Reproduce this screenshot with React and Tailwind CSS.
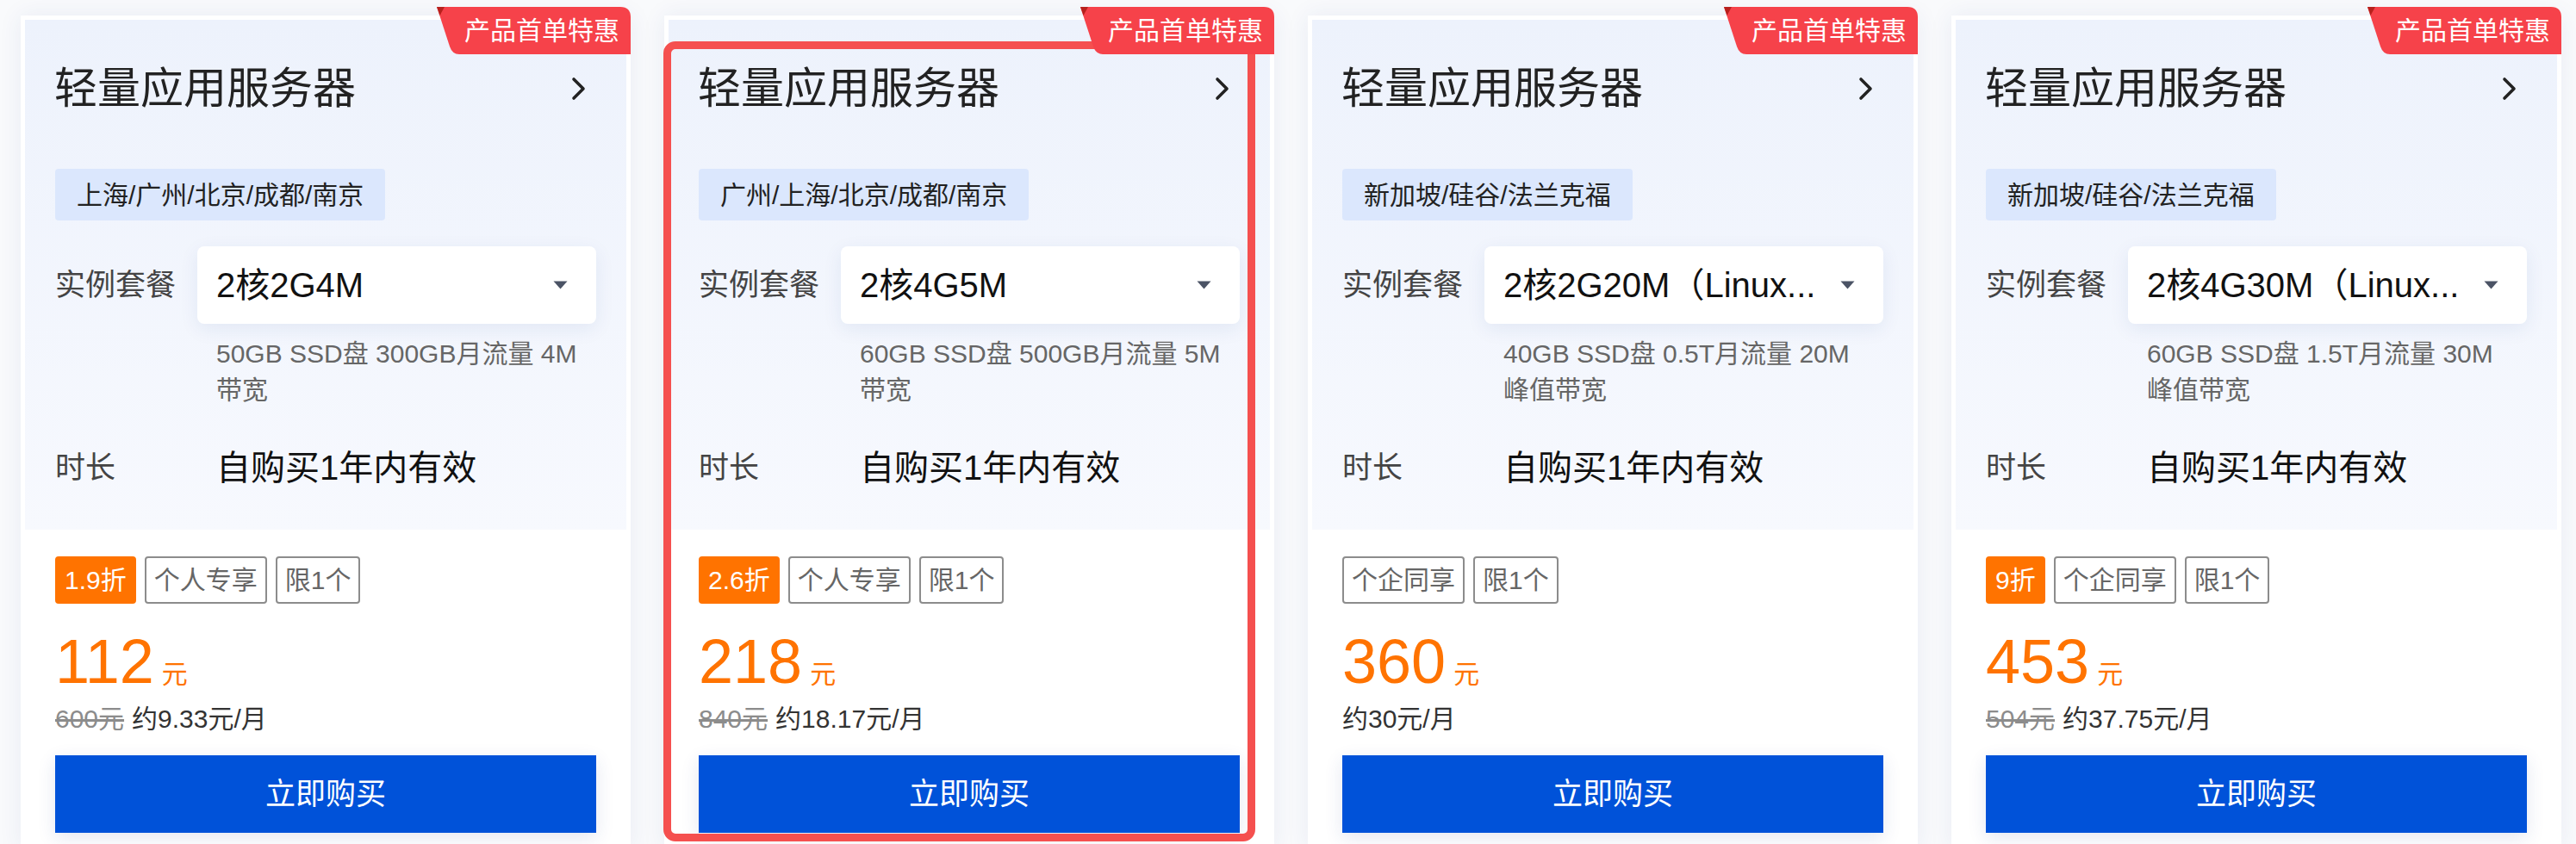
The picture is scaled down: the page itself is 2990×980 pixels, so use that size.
import React from 'react';

const cards = [
  {
    region: '上海/广州/北京/成都/南京',
    plan: '2核2G4M',
    spec: '50GB SSD盘 300GB月流量 4M带宽',
    discount: '1.9折',
    share: '个人专享',
    price: '112',
    original: '600元',
    monthly: '约9.33元/月',
  },
  {
    region: '广州/上海/北京/成都/南京',
    plan: '2核4G5M',
    spec: '60GB SSD盘 500GB月流量 5M带宽',
    discount: '2.6折',
    share: '个人专享',
    price: '218',
    original: '840元',
    monthly: '约18.17元/月',
    selected: true,
  },
  {
    region: '新加坡/硅谷/法兰克福',
    plan: '2核2G20M（Linux...',
    spec: '40GB SSD盘 0.5T月流量 20M峰值带宽',
    discount: null,
    share: '个企同享',
    price: '360',
    original: null,
    monthly: '约30元/月',
  },
  {
    region: '新加坡/硅谷/法兰克福',
    plan: '2核4G30M（Linux...',
    spec: '60GB SSD盘 1.5T月流量 30M峰值带宽',
    discount: '9折',
    share: '个企同享',
    price: '453',
    original: '504元',
    monthly: '约37.75元/月',
  },
];

const Ribbon = () => (
  <div className="absolute top-[-10px] right-0 z-20 w-[225px] h-[55px] flex items-center pl-[32px]">
    <svg className="absolute inset-0" width="225" height="55" viewBox="0 0 225 55">
      <path d="M0 0 H213 Q225 0 225 12 V55 H26 Q18 55 15 46 Z" fill="#f6424a" />
      <path d="M0 0 L9 0 L3.5 10 Z" fill="#b8201c" />
    </svg>
    <span className="relative text-[30px] leading-none text-white whitespace-nowrap">产品首单特惠</span>
  </div>
);

const Chevron = () => (
  <svg width="20" height="28" viewBox="0 0 20 28" className="mr-[10px]">
    <path d="M4 3 L15 14 L4 25" fill="none" stroke="#222" strokeWidth="3.6" strokeLinecap="round" strokeLinejoin="round" />
  </svg>
);

const Caret = () => (
  <svg width="17" height="10" viewBox="0 0 17 10" className="shrink-0">
    <path d="M0.5 0.5 H16.5 L8.5 9.5 Z" fill="#4b5365" />
  </svg>
);

const ServerCard = ({ card }) => (
  <div className="relative bg-white p-[5px] h-[968px] shadow-[0_0_26px_rgba(40,70,140,0.08)]">
    <Ribbon />
    {card.selected && (
      <div className="absolute left-[-1px] top-[30px] w-[687px] h-[929px] z-10 rounded-[14px] border-[9px] border-[#f5504f] pointer-events-none" />
    )}

    {/* top config section */}
    <div className="bg-gradient-to-b from-[#edf2fc] to-[#f7f9fe] px-[35px] pt-[50px] pb-[47px]">
      <div className="flex items-center justify-between h-[60px]">
        <h3 className="text-[50px] leading-[60px] text-[#222] -ml-[1px]">轻量应用服务器</h3>
        <Chevron />
      </div>

      <div className="mt-[63px] flex">
        <span className="h-[60px] px-[25px] flex items-center rounded-[4px] bg-[#dbe7fd] text-[30px] text-[#222] whitespace-nowrap">
          {card.region}
        </span>
      </div>

      <div className="mt-[30px] flex">
        <div className="w-[165px] h-[90px] flex items-center text-[35px] text-[#444]">实例套餐</div>
        <div className="flex-1">
          <div className="h-[90px] flex items-center justify-between pl-[22px] pr-[33px] bg-white rounded-[8px] shadow-[0_6px_22px_rgba(30,60,140,0.08)]">
            <span className="text-[40px] leading-none text-[#111] whitespace-nowrap">{card.plan}</span>
            <Caret />
          </div>
          <p className="mt-[14px] pl-[22px] pr-[21px] text-[30px] leading-[42px] text-[#666]">{card.spec}</p>
        </div>
      </div>

      <div className="mt-[44px] flex items-center h-[50px]">
        <div className="w-[165px] text-[35px] text-[#444]">时长</div>
        <div className="pl-[22px] text-[40px] leading-[50px] text-[#111]">自购买1年内有效</div>
      </div>
    </div>

    {/* price section */}
    <div className="px-[35px] pt-[31px]">
      <div className="flex gap-[10px]">
        {card.discount && (
          <span className="h-[55px] px-[9px] flex items-center rounded-[4px] border-2 border-[#ff7300] bg-[#ff7300] text-[30px] text-white">
            {card.discount}
          </span>
        )}
        <span className="h-[55px] px-[9px] flex items-center rounded-[4px] border-2 border-[#8c8c8c] text-[30px] text-[#666]">
          {card.share}
        </span>
        <span className="h-[55px] px-[9px] flex items-center rounded-[4px] border-2 border-[#8c8c8c] text-[30px] text-[#666]">
          限1个
        </span>
      </div>

      <div className="mt-[31px] flex items-baseline text-[#ff7300]">
        <span className="text-[72px] leading-[72px]">{card.price}</span>
        <span className="ml-[9px] text-[30px]">元</span>
      </div>

      <div className="mt-[10px] text-[30px] leading-[40px] text-[#333]">
        {card.original && <span className="line-through text-[#8c8c8c] mr-[9px]">{card.original}</span>}
        <span>{card.monthly}</span>
      </div>

      <button className="mt-[22px] w-full h-[90px] bg-[#0052d9] text-white text-[35px] shadow-[0_6px_20px_rgba(30,60,140,0.12)]">
        立即购买
      </button>
    </div>
  </div>
);

export default function App() {
  return (
    <div className="w-[2990px] h-[980px] overflow-hidden bg-[#f9fafc] pt-[18px] pl-[24px] font-['Liberation_Sans','Noto_Sans_CJK_SC',sans-serif]">
      <div className="grid grid-cols-[repeat(4,708px)] gap-x-[39px]">
        {cards.map((card, i) => (
          <ServerCard key={i} card={card} />
        ))}
      </div>
    </div>
  );
}
